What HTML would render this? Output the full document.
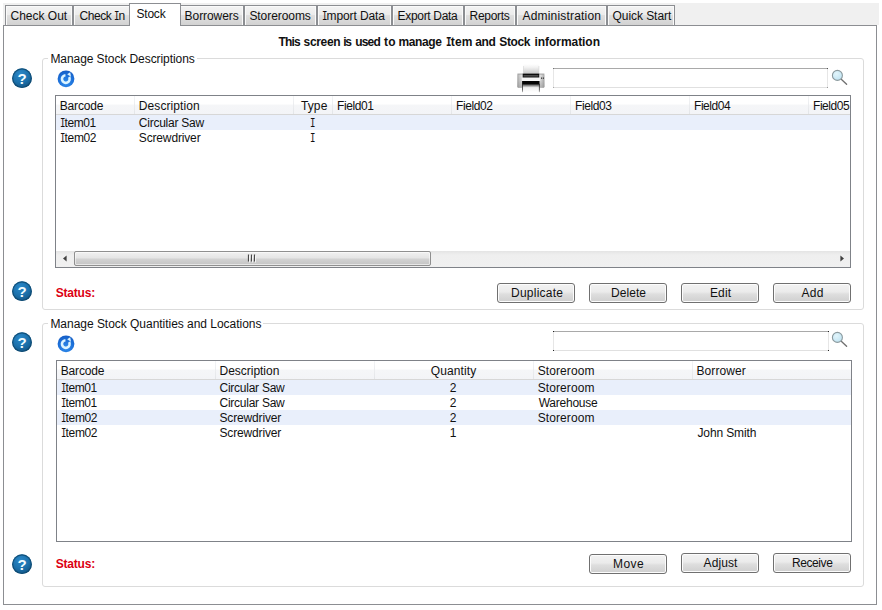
<!DOCTYPE html>
<html>
<head>
<meta charset="utf-8">
<title>Stock</title>
<style>
html,body{margin:0;padding:0;background:#fff;}
body{width:882px;height:610px;position:relative;overflow:hidden;font-family:"Liberation Sans",sans-serif;font-size:12px;color:#111;}
.abs{position:absolute;}
.t{position:absolute;white-space:pre;line-height:14px;height:14px;}
.strip{left:3px;top:3px;width:876px;height:22px;background:#f0f0f0;}
.panel{left:3px;top:25px;width:872px;height:578px;border:1px solid #8c8e92;background:#fff;}
.tab{position:absolute;top:5px;height:20px;box-sizing:border-box;border:1px solid #8c8e92;border-bottom:none;
 background:linear-gradient(#f3f3f3 0%,#ececec 45%,#dfdfdf 50%,#d2d2d2 100%);
 box-shadow:inset 1px 1px 0 #fafafa,inset -1px 0 0 #fafafa;}
.tab.sel{top:3px;height:23px;background:#fff;box-shadow:none;}
.tt{position:absolute;top:9px;white-space:pre;line-height:14px;height:14px;}
.gb{position:absolute;box-sizing:border-box;border:1px solid #dbdbdb;border-radius:3px;}
.leg{position:absolute;background:#fff;white-space:pre;line-height:14px;height:14px;padding:0 2px;}
.lv{position:absolute;box-sizing:border-box;border:1px solid #7f8288;background:#fff;overflow:hidden;}
.hdr{position:absolute;left:0;top:0;right:0;height:18px;border-bottom:1px solid #d7d7d7;
 background:linear-gradient(#ffffff 0%,#ffffff 45%,#f5f6f8 50%,#f3f4f7 100%);}
.hdiv{position:absolute;top:0;width:1px;height:18px;background:linear-gradient(#f3f4f6,#e3e5e8);}
.row{position:absolute;left:0;right:0;height:15px;}
.alt{background:#e9effb;}
.btn{position:absolute;box-sizing:border-box;width:78px;height:20px;border:1px solid #707070;border-radius:3px;
 background:linear-gradient(#f2f2f2 0%,#ebebeb 44%,#dedede 56%,#cfcfcf 100%);
 box-shadow:inset 0 0 0 1px #fcfcfc;}
.tb{position:absolute;box-sizing:border-box;width:275px;height:20px;background:#fff;border:1px solid #e6e6e6;border-top-color:#a9a9a9;border-bottom-color:#e0e0e0;}
.si{font-family:"Liberation Mono",monospace;display:inline-block;width:4.6px;margin-left:-0.3px;letter-spacing:0;transform:scaleX(.76);transform-origin:0 0;}
.d{position:absolute;width:1px;height:1px;background:#222;}
.red{color:#dc0012;font-weight:bold;}
</style>
</head>
<body>
<div class="abs strip"></div>
<div class="abs panel"></div>

<!-- tabs -->
<div class="tab" style="left:5px;width:68px"></div>
<div class="tab" style="left:73px;width:58px"></div>
<div class="tab" style="left:179px;width:65px"></div>
<div class="tab" style="left:244px;width:73px"></div>
<div class="tab" style="left:317px;width:75px"></div>
<div class="tab" style="left:392px;width:72px"></div>
<div class="tab" style="left:464px;width:52px"></div>
<div class="tab" style="left:516px;width:91px"></div>
<div class="tab" style="left:607px;width:68px"></div>
<div class="tab sel" style="left:129px;width:52px"></div>

<span class="tt" id="tt1" style="left:10.5px;letter-spacing:0.0px">Check Out</span>
<span class="tt" id="tt2" style="left:79.4px;letter-spacing:-0.42px">Check <span class="si">I</span>n</span>
<span class="tt" id="tt3" style="left:136.5px;top:6.6px;letter-spacing:-0.22px">Stock</span>
<span class="tt" id="tt4" style="left:184.6px;letter-spacing:-0.07px">Borrowers</span>
<span class="tt" id="tt5" style="left:249.4px;letter-spacing:-0.06px">Storerooms</span>
<span class="tt" id="tt6" style="left:322.2px;letter-spacing:-0.1px"><span class="si">I</span>mport Data</span>
<span class="tt" id="tt7" style="left:397.6px;letter-spacing:-0.33px">Export Data</span>
<span class="tt" id="tt8" style="left:469.6px;letter-spacing:-0.32px">Reports</span>
<span class="tt" id="tt9" style="left:522.5px;letter-spacing:0.19px">Administration</span>
<span class="tt" id="tt10" style="left:612.6px;letter-spacing:-0.07px">Quick Start</span>

<!-- title -->
<div class="abs" id="title" style="left:0;top:35px;width:882px;height:14px;font-weight:bold"><span class="t" id="tw1" style="left:278.5px;top:0;letter-spacing:-0.8px">This </span><span class="t" id="tw2" style="left:303.59px;top:0;letter-spacing:-0.342px">screen </span><span class="t" id="tw3" style="left:343.2px;top:0;letter-spacing:-1.2px">is </span><span class="t" id="tw4" style="left:355.17px;top:0;letter-spacing:-0.79px">used </span><span class="t" id="tw5" style="left:384.01px;top:0;letter-spacing:0.163px">to </span><span class="t" id="tw6" style="left:398.49px;top:0;letter-spacing:-0.388px">manage </span><span class="t" id="tw7" style="left:446.47px;top:0;letter-spacing:0.175px"><span class="si">I</span>tem </span><span class="t" id="tw8" style="left:475.37px;top:0;letter-spacing:-0.456px">and </span><span class="t" id="tw9" style="left:499.29px;top:0;letter-spacing:-0.398px">Stock </span><span class="t" id="tw10" style="left:534.5px;top:0;letter-spacing:-0.052px">information</span></div>

<!-- group boxes -->
<div class="gb" style="left:42px;top:58px;width:822px;height:252px"></div>
<span class="leg" id="leg1" style="left:48.4px;top:52px;letter-spacing:-0.07px">Manage Stock Descriptions</span>
<div class="gb" style="left:42px;top:323px;width:822px;height:264px"></div>
<span class="leg" id="leg2" style="left:48.4px;top:317px;letter-spacing:-0.03px">Manage Stock Quantities and Locations</span>


<!-- help icons -->
<svg class="abs" style="left:11px;top:67px" width="22" height="22" viewBox="0 0 22 22"><use href="#helpico"/></svg>
<svg class="abs" style="left:11px;top:280px" width="22" height="22" viewBox="0 0 22 22"><use href="#helpico"/></svg>
<svg class="abs" style="left:11px;top:331px" width="22" height="22" viewBox="0 0 22 22"><use href="#helpico"/></svg>
<svg class="abs" style="left:11px;top:553px" width="22" height="22" viewBox="0 0 22 22"><use href="#helpico"/></svg>

<!-- refresh icons -->
<svg class="abs" style="left:57px;top:69px" width="18" height="19" viewBox="0 0 18 18"><use href="#refico"/></svg>
<svg class="abs" style="left:57px;top:334px" width="18" height="19" viewBox="0 0 18 18"><use href="#refico"/></svg>

<!-- printer -->
<svg class="abs" style="left:516px;top:64px" width="30" height="30" viewBox="0 0 30 30"><use href="#prnico"/></svg>

<!-- search boxes -->
<div class="tb" style="left:553px;top:68px"><i class="d" style="left:-1px;top:-1px;background:#777"></i><i class="d" style="right:-1px;top:-1px;background:#555"></i><i class="d" style="left:-1px;bottom:-1px;background:#aaa"></i><i class="d" style="right:-1px;bottom:-1px;background:#999"></i></div>
<div class="tb" style="left:553px;top:331px;width:276px"><i class="d" style="left:-1px;top:-1px"></i><i class="d" style="right:-1px;top:-1px"></i><i class="d" style="left:-1px;bottom:-1px"></i><i class="d" style="right:-1px;bottom:-1px"></i></div>
<svg class="abs" style="left:830px;top:69px" width="18" height="18" viewBox="0 0 18 18"><use href="#magico"/></svg>
<svg class="abs" style="left:830px;top:331px" width="18" height="18" viewBox="0 0 18 18"><use href="#magico"/></svg>

<!-- list view 1 -->
<div class="lv" style="left:55px;top:95px;width:796px;height:173px">
  <div class="hdr"></div>
  <div class="hdiv" style="left:78px"></div>
  <div class="hdiv" style="left:237px"></div>
  <div class="hdiv" style="left:276px"></div>
  <div class="hdiv" style="left:395px"></div>
  <div class="hdiv" style="left:514px"></div>
  <div class="hdiv" style="left:633px"></div>
  <div class="hdiv" style="left:752px"></div>
  <span class="t" id="h1a" style="left:3.7px;top:3px;letter-spacing:-0.15px">Barcode</span>
  <span class="t" id="h1b" style="left:82.8px;top:3px;letter-spacing:0.08px">Description</span>
  <span class="t" id="h1c" style="left:245px;top:3px;letter-spacing:0.1px">Type</span>
  <span class="t" id="h1d" style="left:281px;top:3px;letter-spacing:-0.4px">Field01</span>
  <span class="t" id="h1e" style="left:400px;top:3px;letter-spacing:-0.4px">Field02</span>
  <span class="t" id="h1f" style="left:519px;top:3px;letter-spacing:-0.42px">Field03</span>
  <span class="t" id="h1g" style="left:638px;top:3px;letter-spacing:-0.45px">Field04</span>
  <span class="t" id="h1h" style="left:757px;top:3px;letter-spacing:-0.45px">Field05</span>
  <div class="row alt" style="top:19px"></div>
  <span class="t" id="r1a" style="left:4.3px;top:20px;letter-spacing:-0.42px"><span class="si">I</span>tem01</span>
  <span class="t" id="r1b" style="left:82.8px;top:20px;letter-spacing:-0.25px">Circular Saw</span>
  <span class="t" id="r1c" style="left:254px;top:20px"><span class="si">I</span></span>
  <span class="t" id="r2a" style="left:4.3px;top:35px;letter-spacing:-0.36px"><span class="si">I</span>tem02</span>
  <span class="t" id="r2b" style="left:82.8px;top:35px;letter-spacing:-0.15px">Screwdriver</span>
  <span class="t" id="r2c" style="left:254px;top:35px"><span class="si">I</span></span>
  <!-- scrollbar -->
  <div class="abs" style="left:0;top:155px;width:794px;height:16px;background:linear-gradient(#e4e4e4 0%,#efefef 25%,#f0f0f0 100%)"></div>
  <div class="abs" style="left:18px;top:155px;width:357px;height:15px;box-sizing:border-box;border:1px solid #8f8f8f;border-radius:2px;background:linear-gradient(#f1f1f1 0%,#e5e5e5 45%,#d2d2d2 55%,#c8c8c8 88%,#d2d2d2 100%);box-shadow:inset 0 0 0 1px rgba(255,255,255,.5)"></div>
  <svg class="abs" style="left:190px;top:158px" width="12" height="9" viewBox="0 0 12 9"><path d="M2.5 0.5v7M5.5 0.5v7M8.5 0.5v7" stroke="#484848" stroke-width="1.2" fill="none"/><path d="M3.5 1.5v7M6.5 1.5v7M9.5 1.5v7" stroke="#fff" stroke-width="1" fill="none" opacity=".8"/></svg>
  <svg class="abs" style="left:5px;top:158px" width="8" height="10" viewBox="0 0 8 10"><path d="M5.6 1.4L2 4.5L5.6 7.6Z" fill="#404040"/></svg>
  <svg class="abs" style="left:782px;top:158px" width="8" height="10" viewBox="0 0 8 10"><path d="M2.4 1.4L6 4.5L2.4 7.6Z" fill="#404040"/></svg>
</div>

<!-- status / buttons 1 -->
<span class="t red" id="st1" style="left:55.7px;top:286px;letter-spacing:-0.2px">Status:</span>
<div class="btn" style="left:497px;top:283px"></div>
<div class="btn" style="left:589px;top:283px"></div>
<div class="btn" style="left:681px;top:283px"></div>
<div class="btn" style="left:773px;top:283px"></div>
<span class="t" id="b1" style="left:511px;top:286px;letter-spacing:0.24px">Duplicate</span>
<span class="t" id="b2" style="left:611px;top:286px;letter-spacing:0.06px">Delete</span>
<span class="t" id="b3" style="left:710px;top:286px;letter-spacing:0.1px">Edit</span>
<span class="t" id="b4" style="left:801.5px;top:286px;letter-spacing:0.3px">Add</span>

<!-- list view 2 -->
<div class="lv" style="left:56px;top:360px;width:796px;height:182px">
  <div class="hdr"></div>
  <div class="hdiv" style="left:158px"></div>
  <div class="hdiv" style="left:317px"></div>
  <div class="hdiv" style="left:476px"></div>
  <div class="hdiv" style="left:635px"></div>
  <span class="t" id="h2a" style="left:3.7px;top:3px;letter-spacing:-0.15px">Barcode</span>
  <span class="t" id="h2b" style="left:162.5px;top:3px;letter-spacing:-0.02px">Description</span>
  <span class="t" id="h2c" style="left:373.8px;top:3px;letter-spacing:0.1px">Quantity</span>
  <span class="t" id="h2d" style="left:480.7px;top:3px;letter-spacing:0.1px">Storeroom</span>
  <span class="t" id="h2e" style="left:639.5px;top:3px;letter-spacing:0.07px">Borrower</span>
  <div class="row alt" style="top:19px"></div>
  <div class="row alt" style="top:49px"></div>
  <span class="t" id="q1a" style="left:4.3px;top:20px;letter-spacing:-0.42px"><span class="si">I</span>tem01</span>
  <span class="t" id="q1b" style="left:162.5px;top:20px;letter-spacing:-0.25px">Circular Saw</span>
  <span class="t" id="q1c" style="left:392.8px;top:20px">2</span>
  <span class="t" id="q1d" style="left:480.7px;top:20px;letter-spacing:0.1px">Storeroom</span>
  <span class="t" id="q2a" style="left:4.3px;top:35px;letter-spacing:-0.42px"><span class="si">I</span>tem01</span>
  <span class="t" id="q2b" style="left:162.5px;top:35px;letter-spacing:-0.25px">Circular Saw</span>
  <span class="t" id="q2c" style="left:392.8px;top:35px">2</span>
  <span class="t" id="q2d" style="left:481.7px;top:35px;letter-spacing:-0.24px">Warehouse</span>
  <span class="t" id="q3a" style="left:4.3px;top:50px;letter-spacing:-0.36px"><span class="si">I</span>tem02</span>
  <span class="t" id="q3b" style="left:162.5px;top:50px;letter-spacing:-0.15px">Screwdriver</span>
  <span class="t" id="q3c" style="left:392.8px;top:50px">2</span>
  <span class="t" id="q3d" style="left:480.7px;top:50px;letter-spacing:0.1px">Storeroom</span>
  <span class="t" id="q4a" style="left:4.3px;top:65px;letter-spacing:-0.36px"><span class="si">I</span>tem02</span>
  <span class="t" id="q4b" style="left:162.5px;top:65px;letter-spacing:-0.15px">Screwdriver</span>
  <span class="t" id="q4c" style="left:392.8px;top:65px">1</span>
  <span class="t" id="q4e" style="left:640.5px;top:65px;letter-spacing:-0.13px">John Smith</span>
</div>

<!-- status / buttons 2 -->
<span class="t red" id="st2" style="left:55.7px;top:557px;letter-spacing:-0.2px">Status:</span>
<div class="btn" style="left:589px;top:554px"></div>
<div class="btn" style="left:681px;top:553px"></div>
<div class="btn" style="left:773px;top:553px"></div>
<span class="t" id="b5" style="left:613px;top:557px;letter-spacing:0.45px">Move</span>
<span class="t" id="b6" style="left:703.6px;top:556px;letter-spacing:0.08px">Adjust</span>
<span class="t" id="b7" style="left:792px;top:556px;letter-spacing:-0.42px">Receive</span>

<!-- icon defs -->
<svg width="0" height="0" style="position:absolute">
<defs>
  <radialGradient id="hg" cx="0.42" cy="0.3" r="0.75">
    <stop offset="0" stop-color="#2b88c8"/><stop offset="0.55" stop-color="#1c72ad"/><stop offset="1" stop-color="#125281"/>
  </radialGradient>
  <g id="helpico">
    <circle cx="11" cy="11.2" r="9.9" fill="url(#hg)"/>
    <circle cx="11" cy="11.2" r="9.3" fill="none" stroke="#0d4669" stroke-width="1.2" opacity=".75"/>
    <text x="11.1" y="16.9" text-anchor="middle" font-family="Liberation Sans, sans-serif" font-weight="bold" font-size="15" fill="#f0fcff">?</text>
  </g>
  <radialGradient id="rg" cx="0.5" cy="0.75" r="0.8">
    <stop offset="0" stop-color="#2f8cec"/><stop offset="0.6" stop-color="#1c6fd8"/><stop offset="1" stop-color="#1459c0"/>
  </radialGradient>
  <g id="refico">
    <circle cx="9" cy="9.3" r="8.4" fill="url(#rg)"/>
    <path d="M8.45 5.67A3.85 3.85 0 1 0 12.1 7.5" fill="none" stroke="#dcf4ff" stroke-width="2.6" stroke-linecap="butt"/>
    <path d="M10.2 4.7L13.2 2.8L14.0 7.2Z" fill="#dcf4ff"/>
  </g>
  <linearGradient id="pg1" x1="0" y1="0" x2="0" y2="1"><stop offset="0" stop-color="#ffffff"/><stop offset="0.3" stop-color="#f4f4f4"/><stop offset="1" stop-color="#c6c6c6"/></linearGradient>
  <linearGradient id="pg2" x1="0" y1="0" x2="1" y2="0"><stop offset="0" stop-color="#8e8e8e" stop-opacity=".75"/><stop offset="0.17" stop-color="#dedede" stop-opacity=".3"/><stop offset="0.22" stop-color="#ffffff" stop-opacity=".9"/><stop offset="0.78" stop-color="#ffffff" stop-opacity=".9"/><stop offset="0.83" stop-color="#dedede" stop-opacity=".3"/><stop offset="1" stop-color="#8e8e8e" stop-opacity=".75"/></linearGradient>
  <linearGradient id="pg3" x1="0" y1="0" x2="0" y2="1"><stop offset="0" stop-color="#101010"/><stop offset="0.2" stop-color="#8a8a8a"/><stop offset="0.45" stop-color="#f0f0f0"/><stop offset="1" stop-color="#ffffff"/></linearGradient><linearGradient id="pg5" x1="0" y1="0" x2="0" y2="1"><stop offset="0" stop-color="#222"/><stop offset="0.7" stop-color="#555"/><stop offset="1" stop-color="#bbb"/></linearGradient>
  <linearGradient id="pg4" x1="0" y1="0" x2="0" y2="1"><stop offset="0" stop-color="#e9e9e9"/><stop offset="0.5" stop-color="#cfcfcf"/><stop offset="1" stop-color="#9c9c9c"/></linearGradient>
  <g id="prnico">
    <rect x="7.3" y="0" width="15.6" height="10" fill="url(#pg1)"/>
    <rect x="7.0" y="2" width="0.7" height="8" fill="#cfcfcf" opacity=".7"/><rect x="22.6" y="2" width="0.7" height="8" fill="#cfcfcf" opacity=".7"/>
    <rect x="1.4" y="9.9" width="27" height="13.9" rx="1.2" fill="url(#pg4)"/>
    <rect x="1.4" y="9.9" width="27" height="13.9" rx="1.2" fill="url(#pg2)"/>
    <rect x="1.4" y="9.6" width="27" height="0.9" fill="#9a9a9a"/>
    <rect x="6.7" y="9.7" width="16.5" height="4" fill="#0c0c0c"/>
    <rect x="7.5" y="11.2" width="14.9" height="1.3" fill="#5a5a5a"/>
    <rect x="5.8" y="13.7" width="18.4" height="3.3" fill="#f6f6f6"/>
    <rect x="6.1" y="17" width="17.4" height="3" fill="#050505"/>
    <rect x="6.1" y="19.9" width="17.4" height="8.3" fill="url(#pg3)"/>
    <rect x="6.0" y="19.9" width="0.9" height="8.3" fill="url(#pg5)"/>
    <rect x="22.9" y="19.9" width="0.9" height="8.3" fill="url(#pg5)"/>
    <rect x="25.2" y="13.4" width="0.9" height="1.6" fill="#333"/>
    <rect x="26.9" y="13.4" width="0.9" height="1.6" fill="#333"/>
  </g>
  <radialGradient id="mg" cx="0.4" cy="0.35" r="0.7"><stop offset="0" stop-color="#e2f5fb"/><stop offset="1" stop-color="#bfe3f2"/></radialGradient>
  <g id="magico">
    <path d="M11.0 10.0L16.6 15.3" stroke="#707070" stroke-width="1.35" stroke-linecap="round"/>
    <circle cx="7.4" cy="6.4" r="5.0" fill="url(#mg)" stroke="#8c9a9e" stroke-width="1.1"/>
  </g>
</defs>
</svg>
</body>
</html>
